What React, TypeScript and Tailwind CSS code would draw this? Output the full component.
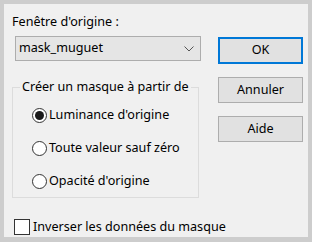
import React from "react";

function Radio({ checked, label }: { checked?: boolean; label: string }) {
  return (
    <div className="flex items-center h-[16px]">
      <span className="w-[15px] h-[15px] rounded-full border border-[#333333] bg-white flex items-center justify-center">
        {checked && <span className="w-[9px] h-[9px] rounded-full bg-[#1a1a1a]" />}
      </span>
      <span className="ml-[2px]">{label}</span>
    </div>
  );
}

export default function App() {
  return (
    <div
      className="w-[312px] h-[242px] bg-[#f0f0f0] border-[#cdcdcd] border-t-4 border-l-4 border-r-4 border-b-[5px] text-[12.6px] text-black"
      style={{ fontFamily: '"Noto Sans", "Open Sans", sans-serif' }}
    >
      <div className="flex">
        <div className="w-[196px] ml-[8px]">
          <div className="mt-[10px] leading-[16px]">Fenêtre d'origine :</div>
          <div className="ml-[3px] mt-[6px] h-[25px] w-[186px] bg-[#e5e5e5] border border-[#adadad] flex items-center justify-between pl-[3px] pr-[6px]">
            <span>mask_muguet</span>
            <svg width="10" height="6" viewBox="0 0 10 6">
              <path d="M0.5 0.5 L5 5 L9.5 0.5" fill="none" stroke="#555" strokeWidth="1" />
            </svg>
          </div>
          <div className="relative mt-[26px] w-[187px] h-[111px] border border-[#dcdcdc]">
            <span className="absolute left-[7px] -top-[9px] bg-[#f0f0f0] px-[2px] leading-[16px]">
              Créer un masque à partir de
            </span>
            <div className="flex flex-col gap-[17px] pl-[19px] pt-[19px]">
              <Radio checked label="Luminance d'origine" />
              <Radio label="Toute valeur sauf zéro" />
              <Radio label="Opacité d'origine" />
            </div>
          </div>
        </div>
        <div className="ml-[10px] mt-[33px] flex flex-col gap-[13px]">
          <button className="w-[85px] h-[27px] bg-[#e1e1e1] border-2 border-[#0078d7] leading-none">OK</button>
          <button className="w-[85px] h-[26px] bg-[#e1e1e1] border border-[#adadad] leading-none">Annuler</button>
          <button className="w-[85px] h-[26px] bg-[#e1e1e1] border border-[#adadad] leading-none">Aide</button>
        </div>
      </div>
      <div className="flex items-center ml-[10px] mt-[20px]">
        <span className="w-[16px] h-[16px] border border-[#333333] bg-white" />
        <span className="ml-[3px]">Inverser les données du masque</span>
      </div>
    </div>
  );
}
